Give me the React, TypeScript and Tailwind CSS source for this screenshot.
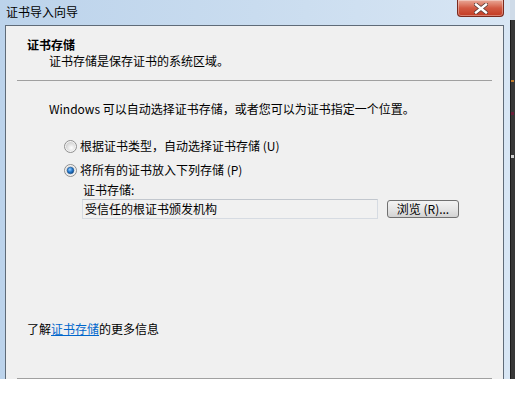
import React from 'react';

const Radio = ({ checked }: { checked?: boolean }) => (
  <svg width="13" height="13" viewBox="0 0 13 13" className="shrink-0">
    <defs>
      <radialGradient id={checked ? 'rgc' : 'rgu'} cx="0.6" cy="0.65" r="0.6">
        <stop offset="0" stopColor="#ffffff" />
        <stop offset="1" stopColor="#d4d4d4" />
      </radialGradient>
      <radialGradient id="dot" cx="0.4" cy="0.35" r="0.7">
        <stop offset="0" stopColor="#9fd2ff" />
        <stop offset="0.5" stopColor="#2a7fd4" />
        <stop offset="1" stopColor="#0c3f7a" />
      </radialGradient>
    </defs>
    <circle cx="6.5" cy="6.5" r="6" fill="#f4f4f4" stroke="#8f8f8f" strokeWidth="1" />
    <circle cx="6.5" cy="6.5" r="4.6" fill={`url(#${checked ? 'rgc' : 'rgu'})`} />
    {checked && <circle cx="6.5" cy="6.5" r="3.3" fill="url(#dot)" stroke="#16508f" strokeWidth="0.6" />}
  </svg>
);

const CloseButton = () => (
  <div className="w-[47px] h-[17px] rounded-b-[4px] border border-t-0 border-[#7a2a1e] bg-gradient-to-b from-[#e9a898] via-[#d25a43] to-[#c23a22] flex items-center justify-center shadow-[inset_0_0_0_1px_rgba(255,255,255,0.35)]">
    <svg width="14" height="11" viewBox="0 0 14 11">
      <path d="M2 1.5 L12 9.5 M12 1.5 L2 9.5" stroke="#5a3a36" strokeWidth="4" strokeLinecap="square" />
      <path d="M2 1.5 L12 9.5 M12 1.5 L2 9.5" stroke="#ffffff" strokeWidth="2.4" strokeLinecap="square" />
    </svg>
  </div>
);

const App = () => {
  return (
    <div className="w-[515px] h-[394px] bg-white overflow-hidden text-[12px] leading-[16px] text-black font-['Noto_Sans_CJK_SC','Noto_Sans',sans-serif]">
      <div className="h-[379px] flex">
        {/* 窗口 */}
        <div className="w-[510px] h-full flex flex-col bg-gradient-to-r from-[#bcd3eb] via-[#c9dcef] to-[#d8e6f4]">
          {/* 标题栏 */}
          <div className="h-[25px] flex items-start justify-between pl-[6px] pr-[6px]">
            <div className="pt-[4px] text-[12px] leading-[16px] text-black">证书导入向导</div>
            <CloseButton />
          </div>

          {/* 客户区 */}
          <div className="flex-1 pl-[5px] pr-[6px] flex">
            <div className="flex-1 flex flex-col border-t border-l border-r border-[#5f6b78] bg-[#f0f0f0]">
              {/* 头部 */}
              <div className="pt-[11px] pl-[21px]">
                <div className="font-bold">证书存储</div>
                <div className="pl-[22px]">证书存储是保存证书的系统区域。</div>
              </div>
              <div className="mt-[11px] mx-[11px] h-px bg-[#a0a0a0]" />

              {/* 正文 */}
              <div className="pl-[43px] mt-[20px]">
                Windows 可以自动选择证书存储，或者您可以为证书指定一个位置。
              </div>

              <div className="pl-[58px] mt-[21px] flex items-center gap-[3px]">
                <Radio />
                <span>根据证书类型，自动选择证书存储 (U)</span>
              </div>
              <div className="pl-[58px] mt-[8px] flex items-center gap-[3px]">
                <Radio checked />
                <span>将所有的证书放入下列存储 (P)</span>
              </div>

              <div className="pl-[77px] mt-[4px]">证书存储:</div>
              <div className="pl-[76px] mt-[1px] flex items-center">
                <div className="w-[296px] h-[20px] border border-[#d6dbe2] border-t-[#c2c7ce] bg-[#f1f1f1] pl-[2px] flex items-center">
                  受信任的根证书颁发机构
                </div>
                <button className="ml-[9px] w-[72px] h-[18px] rounded-[3px] border border-[#707070] bg-gradient-to-b from-[#f3f3f3] via-[#e6e6e6] to-[#d2d2d2] text-[12px] leading-[14px] flex items-center justify-center">
                  浏览 (R)...
                </button>
              </div>

              <div className="pl-[21px] mt-[102px]">
                了解<span className="text-[#0066cc] underline">证书存储</span>的更多信息
              </div>

              <div className="mt-[41px] mx-[11px] h-px bg-[#a0a0a0]" />
            </div>
          </div>
        </div>

        {/* 背后的窗口 */}
        <div className="w-[5px] h-full flex flex-col">
          <div className="h-[20px] bg-[#cfdbe8]" />
          <div className="flex-1 bg-[#383838] border-l border-[#1c1c1c] flex flex-col">
            <div className="h-[60px]" />
            <div className="h-[2px] w-[3px] bg-[#c07a2a]" />
            <div className="h-[30px]" />
            <div className="h-[3px] w-[3px] bg-[#6a1e3a]" />
            <div className="h-[40px]" />
            <div className="h-[3px] w-[3px] bg-[#d0d0d0]" />
          </div>
        </div>
      </div>
    </div>
  );
};

export default App;
